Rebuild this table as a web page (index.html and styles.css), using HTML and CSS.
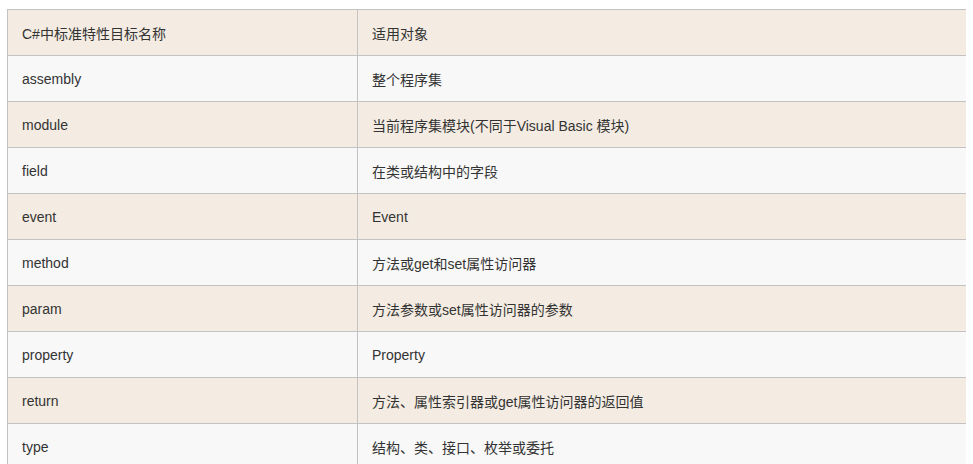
FILE: index.html
```html
<!DOCTYPE html>
<html lang="zh-CN">
<head>
    <meta charset="UTF-8">
    <meta name="viewport" content="width=device-width, initial-scale=1.0">
    <title>C#标准特性目标名称</title>
    <link rel="stylesheet" href="styles.css">
</head>
<body>
    <!-- 特性目标对照表 -->
    <table class="target-table">
        <tbody>
            <tr><td>C#中标准特性目标名称</td><td>适用对象</td></tr>
            <tr><td>assembly</td><td>整个程序集</td></tr>
            <tr><td>module</td><td>当前程序集模块(不同于Visual Basic 模块)</td></tr>
            <tr><td>field</td><td>在类或结构中的字段</td></tr>
            <tr><td>event</td><td>Event</td></tr>
            <tr><td>method</td><td>方法或get和set属性访问器</td></tr>
            <tr><td>param</td><td>方法参数或set属性访问器的参数</td></tr>
            <tr><td>property</td><td>Property</td></tr>
            <tr><td>return</td><td>方法、属性索引器或get属性访问器的返回值</td></tr>
            <tr><td>type</td><td>结构、类、接口、枚举或委托</td></tr>
        </tbody>
    </table>
</body>
</html>
```

FILE: styles.css
```css
body {
    font-family: "Liberation Sans", Arial, "Noto Sans CJK SC", sans-serif;
    font-size: 14px;
    color: #333;
    margin: 9px 7px;
    background-color: #fff;
}

.target-table {
    width: 960px;
    border-collapse: collapse;
}

.target-table td {
    height: 46px;
    padding: 0 14px;
    border: 1px solid #c2c2c2;
    vertical-align: middle;
    text-align: left;
    box-sizing: border-box;
}

.target-table td:first-child {
    width: 350px;
}

.target-table tr:nth-child(odd) {
    background-color: #f4ece2;
}

.target-table tr:nth-child(even) {
    background-color: #f8f8f8;
}
```
